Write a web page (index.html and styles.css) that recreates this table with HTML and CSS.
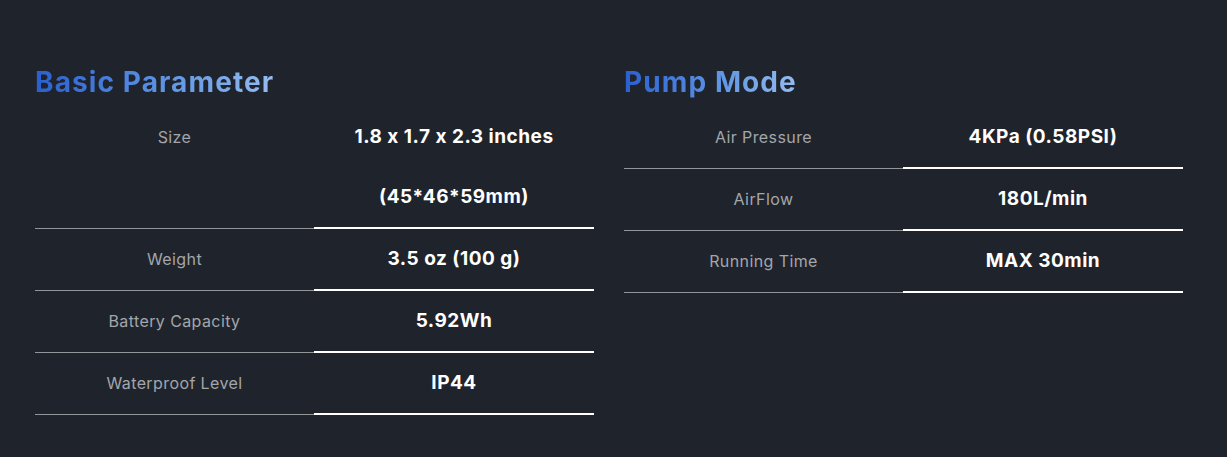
FILE: index.html
```html
<!DOCTYPE html>
<html lang="en">
<head>
<meta charset="utf-8">
<title>Specs</title>
<link rel="stylesheet" href="styles.css">
</head>
<body>
<div class="page">
  <section class="spec">
    <h2 class="title"><span>Basic Parameter</span></h2>
    <div class="table">
      <div class="label">Size</div>
      <div class="value">1.8 x 1.7 x 2.3 inches<br>(45*46*59mm)</div>
      <div class="label">Weight</div>
      <div class="value">3.5 oz (100 g)</div>
      <div class="label">Battery Capacity</div>
      <div class="value">5.92Wh</div>
      <div class="label">Waterproof Level</div>
      <div class="value">IP44</div>
    </div>
  </section>
  <section class="spec">
    <h2 class="title"><span>Pump Mode</span></h2>
    <div class="table">
      <div class="label">Air Pressure</div>
      <div class="value">4KPa (0.58PSI)</div>
      <div class="label">AirFlow</div>
      <div class="value">180L/min</div>
      <div class="label">Running Time</div>
      <div class="value">MAX 30min</div>
    </div>
  </section>
</div>
</body>
</html>
```

FILE: styles.css
```css
html, body {
  margin: 0;
  padding: 0;
  background: #1f242c;
}
body {
  font-family: "Inter", "DejaVu Sans", sans-serif;
  font-feature-settings: "calt" 0;
  height: 457px;
  overflow: hidden;
}
.page {
  display: grid;
  grid-template-columns: 559px 559px;
  column-gap: 30px;
  padding: 67px 0 0 35px;
}
.title {
  margin: 0 0 10px 0;
  font-size: 28px;
  line-height: 30px;
  font-weight: 700;
  letter-spacing: 1.1px;
}
.title span {
  background: linear-gradient(90deg, #2a5fd0 0%, #5f95e4 55%, #95bcef 100%);
  -webkit-background-clip: text;
  background-clip: text;
  color: transparent;
}
.table {
  display: grid;
  grid-template-columns: 279px 1fr;
}
.label {
  text-align: center;
  font-size: 16px;
  letter-spacing: 0.4px;
  line-height: 60px;
  color: #a3a6ab;
  border-bottom: 1px solid #92959a;
}
.value {
  text-align: center;
  font-size: 19px;
  letter-spacing: 0.5px;
  line-height: 60px;
  font-weight: 700;
  color: #ffffff;
  border-bottom: 2px solid #ffffff;
}
```
